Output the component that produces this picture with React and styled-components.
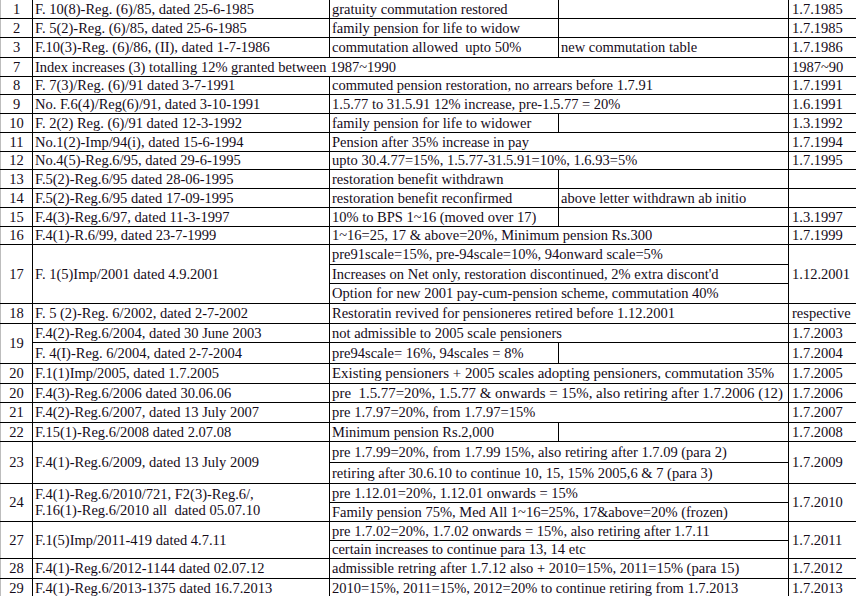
import styled, { createGlobalStyle } from "styled-components";

const GlobalStyle = createGlobalStyle`
  html, body {
    margin: 0;
    padding: 0;
    background: #ffffff;
    overflow: hidden;
  }
`;

const Sheet = styled.table`
  border-collapse: collapse;
  table-layout: fixed;
  width: 860px;
  font-family: "Liberation Serif", "Times New Roman", serif;
  font-size: 14.5px;
  color: #150b19;
  white-space: nowrap;

  td {
    border: 1px solid #000000;
    padding: 0 2px;
    overflow: hidden;
    vertical-align: middle;
    line-height: 16px;
  }

  tr:first-child td {
    border-top: none;
  }
`;

const Row = styled.tr`
  height: ${(p) => p.$h || 19}px;
`;

const Num = styled.td`
  text-align: center;
  && {
    border-left: 1px solid #bdbdbd;
  }
`;

const Cell = styled.td`
  text-align: left;
  font-size: ${(p) => (p.$big ? "14.9px" : "inherit")};
`;

const When = styled.td`
  text-align: left;
  && {
    padding-left: 3px;
  }
`;

const App = () => {
  return (
    <>
      <GlobalStyle />
      <Sheet>
        <colgroup>
          <col style={{ width: 32 }} />
          <col style={{ width: 297 }} />
          <col style={{ width: 229 }} />
          <col style={{ width: 230 }} />
          <col style={{ width: 72 }} />
        </colgroup>
        <tbody>
          <Row $h={18}>
            <Num>1</Num>
            <Cell>F. 10(8)-Reg. (6)/85, dated 25-6-1985</Cell>
            <Cell>gratuity commutation restored</Cell>
            <Cell></Cell>
            <When>1.7.1985</When>
          </Row>
          <Row>
            <Num>2</Num>
            <Cell>F. 5(2)-Reg. (6)/85, dated 25-6-1985</Cell>
            <Cell>family pension for life to widow</Cell>
            <Cell></Cell>
            <When>1.7.1985</When>
          </Row>
          <Row $h={20}>
            <Num>3</Num>
            <Cell>F.10(3)-Reg. (6)/86, (II), dated 1-7-1986</Cell>
            <Cell>commutation allowed&nbsp; upto 50%</Cell>
            <Cell>new commutation table</Cell>
            <When>1.7.1986</When>
          </Row>
          <Row>
            <Num>7</Num>
            <Cell colSpan={3}>Index increases (3) totalling 12% granted between 1987~1990</Cell>
            <When>1987~90</When>
          </Row>
          <Row $h={18}>
            <Num>8</Num>
            <Cell>F. 7(3)/Reg. (6)/91 dated 3-7-1991</Cell>
            <Cell colSpan={2}>commuted pension restoration, no arrears before 1.7.91</Cell>
            <When>1.7.1991</When>
          </Row>
          <Row>
            <Num>9</Num>
            <Cell>No. F.6(4)/Reg(6)/91, dated 3-10-1991</Cell>
            <Cell colSpan={2}>1.5.77 to 31.5.91 12% increase, pre-1.5.77 = 20%</Cell>
            <When>1.6.1991</When>
          </Row>
          <Row>
            <Num>10</Num>
            <Cell>F. 2(2) Reg. (6)/91 dated 12-3-1992</Cell>
            <Cell>family pension for life to widower</Cell>
            <Cell></Cell>
            <When>1.3.1992</When>
          </Row>
          <Row>
            <Num>11</Num>
            <Cell>No.1(2)-Imp/94(i), dated 15-6-1994</Cell>
            <Cell colSpan={2}>Pension after 35% increase in pay</Cell>
            <When>1.7.1994</When>
          </Row>
          <Row $h={18}>
            <Num>12</Num>
            <Cell>No.4(5)-Reg.6/95, dated 29-6-1995</Cell>
            <Cell colSpan={2}>upto 30.4.77=15%, 1.5.77-31.5.91=10%, 1.6.93=5%</Cell>
            <When>1.7.1995</When>
          </Row>
          <Row>
            <Num>13</Num>
            <Cell>F.5(2)-Reg.6/95 dated 28-06-1995</Cell>
            <Cell>restoration benefit withdrawn</Cell>
            <Cell></Cell>
            <When></When>
          </Row>
          <Row>
            <Num>14</Num>
            <Cell>F.5(2)-Reg.6/95 dated 17-09-1995</Cell>
            <Cell>restoration benefit reconfirmed</Cell>
            <Cell>above letter withdrawn ab initio</Cell>
            <When></When>
          </Row>
          <Row>
            <Num>15</Num>
            <Cell>F.4(3)-Reg.6/97, dated 11-3-1997</Cell>
            <Cell>10% to BPS 1~16 (moved over 17)</Cell>
            <Cell></Cell>
            <When>1.3.1997</When>
          </Row>
          <Row $h={18}>
            <Num>16</Num>
            <Cell>F.4(1)-R.6/99, dated 23-7-1999</Cell>
            <Cell colSpan={2}>1~16=25, 17 &amp; above=20%, Minimum pension Rs.300</Cell>
            <When>1.7.1999</When>
          </Row>
          <Row $h={20}>
            <Num rowSpan={3}>17</Num>
            <Cell rowSpan={3}>F. 1(5)Imp/2001 dated 4.9.2001</Cell>
            <Cell colSpan={2}>pre91scale=15%, pre-94scale=10%, 94onward scale=5%</Cell>
            <When rowSpan={3}>1.12.2001</When>
          </Row>
          <Row>
            <Cell colSpan={2}>Increases on Net only, restoration discontinued, 2% extra discont'd</Cell>
          </Row>
          <Row $h={20}>
            <Cell colSpan={2}>Option for new 2001 pay-cum-pension scheme, commutation 40%</Cell>
          </Row>
          <Row $h={20}>
            <Num>18</Num>
            <Cell>F. 5 (2)-Reg. 6/2002, dated 2-7-2002</Cell>
            <Cell colSpan={2}>Restoratin revived for pensioneres retired before 1.12.2001</Cell>
            <When>respective</When>
          </Row>
          <Row>
            <Num rowSpan={2}>19</Num>
            <Cell>F.4(2)-Reg.6/2004, dated 30 June 2003</Cell>
            <Cell colSpan={2}>not admissible to 2005 scale pensioners</Cell>
            <When>1.7.2003</When>
          </Row>
          <Row $h={21}>
            <Cell>F. 4(I)-Reg. 6/2004, dated 2-7-2004</Cell>
            <Cell>pre94scale= 16%, 94scales = 8%</Cell>
            <Cell></Cell>
            <When>1.7.2004</When>
          </Row>
          <Row $h={20}>
            <Num>20</Num>
            <Cell>F.1(1)Imp/2005, dated 1.7.2005</Cell>
            <Cell colSpan={2} $big>Existing pensioners + 2005 scales adopting pensioners, commutation 35%</Cell>
            <When>1.7.2005</When>
          </Row>
          <Row>
            <Num>20</Num>
            <Cell>F.4(3)-Reg.6/2006 dated 30.06.06</Cell>
            <Cell colSpan={2} $big>pre&nbsp; 1.5.77=20%, 1.5.77 &amp; onwards = 15%, also retiring after 1.7.2006 (12)</Cell>
            <When>1.7.2006</When>
          </Row>
          <Row $h={20}>
            <Num>21</Num>
            <Cell>F.4(2)-Reg.6/2007, dated 13 July 2007</Cell>
            <Cell colSpan={2}>pre 1.7.97=20%, from 1.7.97=15%</Cell>
            <When>1.7.2007</When>
          </Row>
          <Row>
            <Num>22</Num>
            <Cell>F.15(1)-Reg.6/2008 dated 2.07.08</Cell>
            <Cell>Minimum pension Rs.2,000</Cell>
            <Cell></Cell>
            <When>1.7.2008</When>
          </Row>
          <Row $h={21}>
            <Num rowSpan={2}>23</Num>
            <Cell rowSpan={2}>F.4(1)-Reg.6/2009, dated 13 July 2009</Cell>
            <Cell colSpan={2}>pre 1.7.99=20%, from 1.7.99 15%, also retiring after 1.7.09 (para 2)</Cell>
            <When rowSpan={2}>1.7.2009</When>
          </Row>
          <Row $h={21}>
            <Cell colSpan={2}>retiring after 30.6.10 to continue 10, 15, 15% 2005,6 &amp; 7 (para 3)</Cell>
          </Row>
          <Row>
            <Num rowSpan={2}>24</Num>
            <Cell rowSpan={2}>
              F.4(1)-Reg.6/2010/721, F2(3)-Reg.6/,
              <br />
              F.16(1)-Reg.6/2010 all&nbsp; dated 05.07.10
            </Cell>
            <Cell colSpan={2}>pre 1.12.01=20%, 1.12.01 onwards = 15%</Cell>
            <When rowSpan={2}>1.7.2010</When>
          </Row>
          <Row>
            <Cell colSpan={2}>Family pension 75%, Med All 1~16=25%, 17&amp;above=20% (frozen)</Cell>
          </Row>
          <Row>
            <Num rowSpan={2}>27</Num>
            <Cell rowSpan={2}>F.1(5)Imp/2011-419 dated 4.7.11</Cell>
            <Cell colSpan={2}>pre 1.7.02=20%, 1.7.02 onwards = 15%, also retiring after 1.7.11</Cell>
            <When rowSpan={2}>1.7.2011</When>
          </Row>
          <Row $h={18}>
            <Cell colSpan={2}>certain increases to continue para 13, 14 etc</Cell>
          </Row>
          <Row $h={20}>
            <Num>28</Num>
            <Cell>F.4(1)-Reg.6/2012-1144 dated 02.07.12</Cell>
            <Cell colSpan={2}>admissible retring after 1.7.12 also + 2010=15%, 2011=15% (para 15)</Cell>
            <When>1.7.2012</When>
          </Row>
          <Row>
            <Num>29</Num>
            <Cell>F.4(1)-Reg.6/2013-1375 dated 16.7.2013</Cell>
            <Cell colSpan={2}>2010=15%, 2011=15%, 2012=20% to continue retiring from 1.7.2013</Cell>
            <When>1.7.2013</When>
          </Row>
        </tbody>
      </Sheet>
    </>
  );
};

export default App;
